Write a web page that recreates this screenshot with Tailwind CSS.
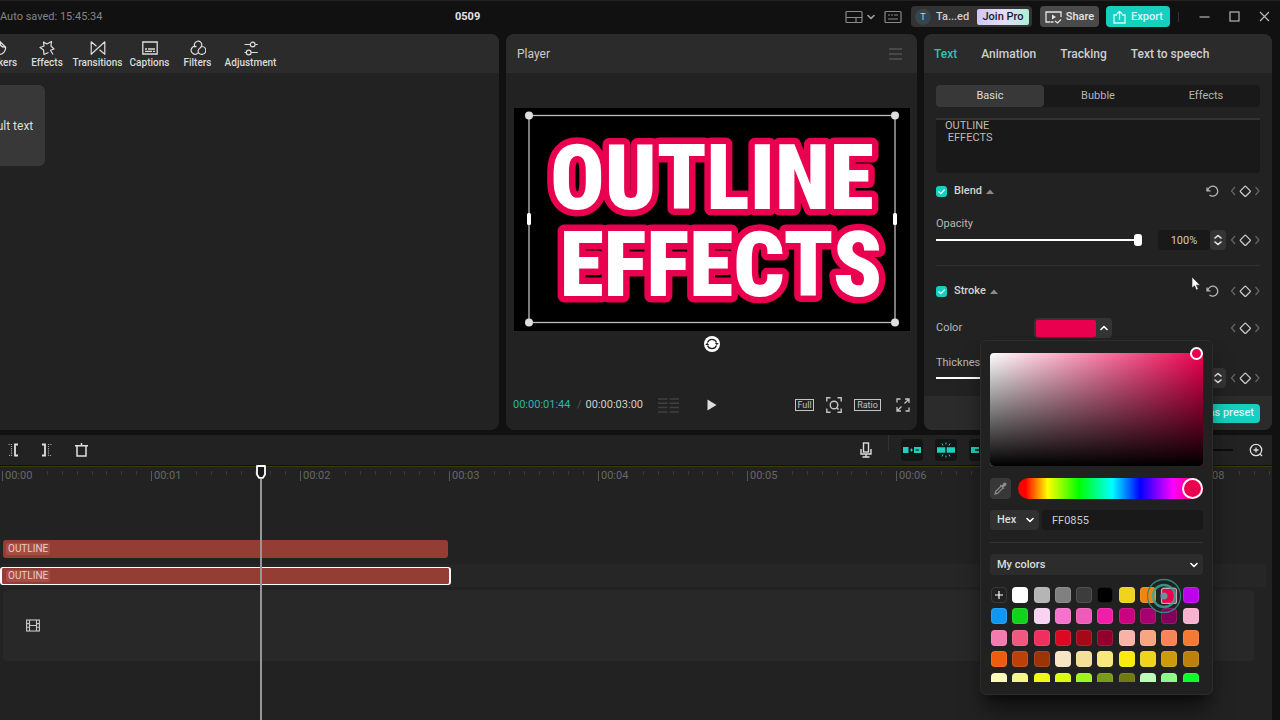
<!DOCTYPE html>
<html lang="en">
<head>
  <meta charset="UTF-8" />
  <meta name="viewport" content="width=device-width, initial-scale=1.0"/>
  <title>0509</title>
  <script src="https://cdn.jsdelivr.net/npm/@tailwindcss/browser@4"></script>
</head>
<body class="min-h-screen flex flex-col overflow-hidden bg-[#111111] text-[#d4d4d4] font-[Roboto,sans-serif] text-[11px] leading-4">

<!-- shared icons -->
<svg class="hidden">
  <symbol id="key" viewBox="0 0 30 12">
    <g fill="none" stroke-width="1.2">
      <path d="M5 2 1.500 6 5 10M25.500 2 29 6 25.500 10" stroke="#666666"/>
      <rect x="11.500" y="2.500" width="7.600" height="7.600" rx="1" transform="rotate(45 15.300 6.300)" stroke="#c9c9c9" stroke-width="1.300"/>
    </g>
  </symbol>
  <symbol id="reset" viewBox="0 0 14 14">
    <path d="M1.800 6.500A5 5 0 1 1 3.500 11M1 3.500v3.300h3.500" fill="none" stroke="#b5b5b5" stroke-width="1.300"/>
  </symbol>
  <symbol id="steps" viewBox="0 0 10 14">
    <path d="M2 5 5 2.500 8 5M2 9l3 2.500L8 9" fill="none" stroke="#eeeeee" stroke-width="1.600" stroke-linecap="round" stroke-linejoin="round"/>
  </symbol>
  <symbol id="down" viewBox="0 0 8 6">
    <path d="M1 1.500 4 4.500 7 1.500" fill="none" stroke="currentColor" stroke-width="1.600" stroke-linecap="round" stroke-linejoin="round"/>
  </symbol>
  <symbol id="check" viewBox="0 0 12 12">
    <path d="M3 6.200 5.200 8.300 9 4.300" fill="none" stroke="#ffffff" stroke-width="1.400" stroke-linecap="round"/>
  </symbol>
</svg>

<header class="h-[34px] shrink-0 flex items-center border-t border-[#222222] pr-[10px] pb-[2px]">
  <span class="w-[455px] text-[#848484]">Auto saved: 15:45:34</span>
  <h1 class="font-bold text-[#e4e4e4]">0509</h1>
  <div class="ml-auto flex items-center">
    <button aria-label="Layout" class="flex items-center gap-1 text-[#a0a0a0]">
      <svg class="w-[18px] h-[14px]" viewBox="0 0 18 14" fill="none" stroke="#8a8a8a" stroke-width="1.200"><rect x="1" y="1.500" width="16" height="11" rx="1"/><path d="M1 7.500h16M11 7.500v5"/></svg>
      <svg class="w-2 h-[6px]"><use href="#down"/></svg>
    </button>
    <button aria-label="Shortcuts" class="ml-[9px]">
      <svg class="w-[18px] h-[14px]" viewBox="0 0 18 14" fill="none" stroke="#8a8a8a" stroke-width="1.200"><rect x="1" y="1.500" width="16" height="11" rx="1"/><path d="M4 5h2M7 5h2M10 5h4M4 9h10"/></svg>
    </button>
    <div class="ml-[9px] h-[21px] w-[121px] flex items-center rounded bg-[#333333] pl-1 pr-[3px]">
      <span class="size-4 rounded-full bg-[#35474d] text-[9px] text-center text-[#c6d3d6]">T</span>
      <span class="ml-[5px] font-medium text-[#d0d0d0]">Ta...ed</span>
      <button class="ml-auto h-4 w-[52px] rounded-xs bg-linear-to-r from-[#cfc6f8] via-[#e6dcf8] to-[#aeeedb] font-medium text-[#1b1b25]">Join Pro</button>
    </div>
    <button class="ml-2 h-[21px] w-[59px] flex items-center justify-center gap-1 rounded bg-[#4a4a4a] font-medium text-[#e4e4e4]">
      <svg class="w-[17px] h-[14px]" viewBox="0 0 17 14" fill="none" stroke="#e4e4e4" stroke-width="1.300"><path d="M5 12H1V2h15v5M8.500 12H5.500M10 11l2.500 2 3.500-3.500"/><path d="m7 4.500 4 2.500-4 2.500z" fill="#e4e4e4" stroke="none"/></svg>
      Share
    </button>
    <button class="ml-[7px] h-[21px] w-[64px] flex items-center justify-center gap-[5px] rounded bg-[#16cfc0] font-medium text-[#d4fbf6]">
      <svg class="w-[13px] h-[14px]" viewBox="0 0 13 14" fill="none" stroke="#d4fbf6" stroke-width="1.300"><path d="M4 5H1v8h11V5H9M6.500 10V1.500M3.800 4 6.500 1.300 9.200 4"/></svg>
      Export
    </button>
    <span class="ml-2 h-[10px] w-px bg-[#333333]"></span>
    <div class="ml-5 flex items-center gap-[19px]">
      <button aria-label="Minimize"><svg class="size-[11px]" viewBox="0 0 11 11"><path d="M.5 6h10" stroke="#b8b8b8" stroke-width="1.200"/></svg></button>
      <button aria-label="Maximize"><svg class="size-[11px]" viewBox="0 0 11 11"><rect x="1" y="1" width="9" height="9" fill="none" stroke="#b8b8b8" stroke-width="1.200"/></svg></button>
      <button aria-label="Close"><svg class="size-[11px]" viewBox="0 0 11 11"><path d="m1 1 9 9M10 1l-9 9" stroke="#b8b8b8" stroke-width="1.200"/></svg></button>
    </div>
  </div>
</header>

<main class="grid grid-cols-[minmax(0,1fr)_411px_348px] gap-[7px] pr-2">

  <section class="rounded-r-lg bg-[#222222] overflow-hidden">
    <nav class="h-[39px] flex bg-[#2b2b2b] text-[10px] leading-3 font-medium text-[#dadada]">
      <button class="-ml-6 w-[46px] flex flex-col items-center pt-[6px] gap-px">
        <svg class="size-4" viewBox="0 0 16 16" fill="none" stroke="#dddddd" stroke-width="1.300"><path d="M9 1.500a6.500 6.500 0 1 0 5.500 5.500zM9 1.500C8.500 5 10.500 7.500 14.500 7"/></svg>Stickers
      </button>
      <button class="w-[50px] flex flex-col items-center pt-[6px] gap-px">
        <svg class="size-4" viewBox="0 0 16 16" fill="none" stroke="#dddddd" stroke-width="1.200" stroke-linejoin="round"><path d="M9.500 12.500 5 14.500 4.600 10 1 7.500 5 6 4.500 2 8 4 12.500 1.500 12 6 15 9 11.500 10.200 14 14.500"/></svg>Effects
      </button>
      <button class="w-[51px] flex flex-col items-center pt-[6px] gap-px">
        <svg class="size-4" viewBox="0 0 16 16" fill="none" stroke="#dddddd" stroke-width="1.200" stroke-linejoin="round"><path d="M6.500 6.300 1.200 1.800v12.500L14.800 1.800v12.500L9.500 9.700"/></svg>Transitions
      </button>
      <button class="w-[53px] flex flex-col items-center pt-[6px] gap-px">
        <svg class="size-4" viewBox="0 0 16 16" fill="none" stroke="#dddddd" stroke-width="1.300"><path d="M.8 2h14.400v12H.8zM3 9h2M6 9h7M3 11.300h7M11 11.300h2"/></svg>Captions
      </button>
      <button class="w-[43px] flex flex-col items-center pt-[6px] gap-px">
        <svg class="size-4" viewBox="0 0 16 16" fill="none" stroke="#dddddd" stroke-width="1.200"><path d="M5.300 7.300A3.700 3.700 0 1 1 11.600 6C11 8 8.500 8.500 8 11M6.500 6.600A3.900 3.900 0 1 0 8 12.800M8 11a3.900 3.900 0 1 0 4-4.500"/></svg>Filters
      </button>
      <button class="w-[63px] flex flex-col items-center pt-[6px] gap-px">
        <svg class="size-4" viewBox="0 0 16 16" fill="none" stroke="#dddddd" stroke-width="1.200"><path d="M1.500 4.500h5.700M12.200 4.500h2.600M1.500 12.500h1.700M8.200 12.500h6.600"/><circle cx="9.700" cy="4.500" r="2.400"/><circle cx="5.700" cy="12.500" r="2.400"/></svg>Adjustment
      </button>
    </nav>
    <button class="mt-3 -ml-10 h-[81px] w-[85px] rounded-md bg-[#383838] text-[12px] text-[#dddddd]">Default text</button>
  </section>

  <section class="flex flex-col rounded-lg bg-[#222222] overflow-hidden">
    <div class="h-[39px] flex items-center justify-between bg-[#2b2b2b] pl-[11px] pr-[15px] text-[12px] text-[#cccccc]">
      <h2>Player</h2>
      <button aria-label="Player menu"><svg class="w-[13px] h-3" viewBox="0 0 13 12"><path d="M0 1h13M0 6h13M0 11h13" stroke="#666666" stroke-width="1.200"/></svg></button>
    </div>
    <div class="mt-[35px] pl-2 pr-[7px] text-center">
      <svg class="w-full bg-black" viewBox="0 0 396 223" role="img" aria-label="Preview">
        <g font-family="'Roboto Condensed',Roboto,sans-serif" font-weight="900" font-size="90" fill="#ffffff" stroke="#e9004f" stroke-width="13" stroke-linejoin="round" paint-order="stroke" text-anchor="middle">
          <text x="198" y="101">OUTLINE</text>
          <text x="207" y="188">EFFECTS</text>
        </g>
        <rect x="15" y="7.500" width="366" height="207" fill="none" stroke="#bdbdbd" stroke-width="1.300"/>
        <g fill="#dedede"><circle cx="15" cy="7.500" r="4"/><circle cx="381" cy="7.500" r="4"/><circle cx="15" cy="214.500" r="4"/><circle cx="381" cy="214.500" r="4"/></g>
        <g fill="#ffffff"><rect x="13" y="105" width="4" height="12" rx="1.500"/><rect x="379" y="105" width="4" height="12" rx="1.500"/></g>
      </svg>
      <button aria-label="Rotate" class="mt-[5px] size-4 rounded-full bg-white">
        <svg class="size-4" viewBox="0 0 16 16" fill="none" stroke="#222222" stroke-width="1.300"><path d="M3.500 6.500a4.800 4.800 0 0 1 9 0M12.500 9.500a4.800 4.800 0 0 1-9 0"/><path d="M10.800 7h4l-2 2.300zM1.200 9h4l-2-2.300z" fill="#222222" stroke="none"/></svg>
      </button>
    </div>
    <div class="mt-auto h-[50px] flex items-center pl-[7px] pr-[7px]">
      <span class="w-[60px] text-[#2fb5a5]">00:00:01:44</span>
      <span class="mx-1 text-[#555555]">/</span>
      <span class="w-[61px] text-[#d0d0d0]">00:00:03:00</span>
      <svg class="ml-[11px] w-[21px] h-[15px]" viewBox="0 0 21 15"><path d="M0 1h9.500M11.500 1H21M0 5.300h9.500M11.500 5.300H21M0 9.600h9.500M11.500 9.600H21M0 14h9.500M11.500 14H21" stroke="#404040" stroke-width="1.500"/></svg>
      <button aria-label="Play" class="ml-7"><svg class="w-[10px] h-3" viewBox="0 0 10 12"><path d="M.5.500 9.500 6 .5 11.500z" fill="#dddddd"/></svg></button>
      <div class="ml-auto flex items-center gap-3">
        <button class="h-3 w-[19px] border border-[#c4c4c4] text-[9px] leading-[10px] text-[#c4c4c4]">Full</button>
        <button aria-label="Zoom preview"><svg class="size-4" viewBox="0 0 16 16" fill="none" stroke="#c4c4c4" stroke-width="1.400"><path d="M.8 4.500V.8h3.700M11.500.8h3.700v3.700M15.200 11.500v3.700h-3.700M4.500 15.200H.8v-3.700"/><circle cx="8" cy="8" r="3.800"/><path d="m10.500 10.500 2 2"/></svg></button>
        <button class="h-3 w-[27px] border border-[#c4c4c4] text-[9px] leading-[10px] text-[#c4c4c4]">Ratio</button>
        <button aria-label="Full screen" class="ml-[3px]"><svg class="size-[14px]" viewBox="0 0 14 14" fill="none" stroke="#c4c4c4" stroke-width="1.300"><path d="M1 4.500V1h3.500M13 9.500V13H9.500M9 1h4v4M13 1 8.500 5.500M5 13H1V9M1 13l4.500-4.500"/></svg></button>
      </div>
    </div>
  </section>

  <section class="relative flex flex-col rounded-lg bg-[#222222]">
    <nav class="h-[39px] flex items-center gap-6 rounded-t-lg bg-[#2b2b2b] px-[10px] text-[12px] font-medium text-[#cfcfcf]">
      <a href="#" class="text-[#2bc4b4]">Text</a>
      <a href="#">Animation</a>
      <a href="#">Tracking</a>
      <a href="#">Text to speech</a>
    </nav>
    <div class="px-3 pt-3">
      <div class="h-[22px] grid grid-cols-3 rounded bg-[#191919] text-[#b4b4b4]">
        <button class="rounded bg-[#383838] text-[#dddddd]">Basic</button>
        <button>Bubble</button>
        <button>Effects</button>
      </div>
      <textarea aria-label="Text" class="mt-[11px] block h-[55px] w-full resize-none rounded-b border-t-2 border-[#333333] bg-[#191919] pl-[9px] text-[11px] leading-3 text-[#bcbcbc]">OUTLINE
 EFFECTS</textarea>

      <div class="mt-[10px] h-4 flex items-center">
        <label class="flex items-center font-medium">
          <span class="grid">
            <input type="checkbox" checked class="col-start-1 row-start-1 size-[11px] appearance-none rounded-[3px] bg-[#16cfc0]"/>
            <svg class="col-start-1 row-start-1 size-[11px]"><use href="#check"/></svg>
          </span>
          <span class="ml-[7px]">Blend</span>
        </label>
        <svg class="ml-1 w-2 h-[5px]" viewBox="0 0 8 5"><path d="M0 5 4 .5 8 5z" fill="#8a8a8a"/></svg>
        <button aria-label="Reset blend" class="ml-auto"><svg class="size-[14px]"><use href="#reset"/></svg></button>
        <button aria-label="Blend keyframe" class="ml-[10px]"><svg class="w-[30px] h-3"><use href="#key"/></svg></button>
      </div>

      <label for="opacity" class="mt-[17px] block text-[#b8b8b8]">Opacity</label>
      <div class="-mt-[2px] h-5 flex items-center">
        <input id="opacity" type="range" value="100" class="h-[2px] w-[206px] appearance-none bg-white [&::-webkit-slider-thumb]:appearance-none [&::-webkit-slider-thumb]:h-3 [&::-webkit-slider-thumb]:w-2 [&::-webkit-slider-thumb]:rounded-[3px] [&::-webkit-slider-thumb]:bg-white"/>
        <input aria-label="Opacity value" value="100%" class="ml-4 h-5 w-[52px] rounded bg-[#191919] text-center text-[#cccccc]"/>
        <button aria-label="Step opacity" class="h-5 w-4 grid place-items-center rounded bg-[#343434]"><svg class="w-[10px] h-[14px]"><use href="#steps"/></svg></button>
        <button aria-label="Opacity keyframe" class="ml-auto"><svg class="w-[30px] h-3"><use href="#key"/></svg></button>
      </div>

      <hr class="mt-[15px] border-[#303030]"/>

      <div class="mt-[17px] h-4 flex items-center">
        <label class="flex items-center font-medium">
          <span class="grid">
            <input type="checkbox" checked class="col-start-1 row-start-1 size-[11px] appearance-none rounded-[3px] bg-[#16cfc0]"/>
            <svg class="col-start-1 row-start-1 size-[11px]"><use href="#check"/></svg>
          </span>
          <span class="ml-[7px]">Stroke</span>
        </label>
        <svg class="ml-1 w-2 h-[5px]" viewBox="0 0 8 5"><path d="M0 5 4 .5 8 5z" fill="#8a8a8a"/></svg>
        <button aria-label="Reset stroke" class="ml-auto"><svg class="size-[14px]"><use href="#reset"/></svg></button>
        <button aria-label="Stroke keyframe" class="ml-[10px]"><svg class="w-[30px] h-3"><use href="#key"/></svg></button>
      </div>

      <div class="mt-[19px] h-5 flex items-center">
        <span class="w-[98px] text-[#b8b8b8]">Color</span>
        <button aria-label="Stroke color" class="h-5 w-[78px] flex items-center rounded bg-[#343434] pl-[2px] text-white">
          <span class="h-[17px] w-[60px] rounded-xs bg-[#e9004f]"></span>
          <svg class="ml-1 w-2 h-[6px] rotate-180"><use href="#down"/></svg>
        </button>
        <button aria-label="Color keyframe" class="ml-auto"><svg class="w-[30px] h-3"><use href="#key"/></svg></button>
      </div>

      <label for="thickness" class="mt-[17px] block text-[#b8b8b8]">Thickness</label>
      <div class="-mt-[3px] h-5 flex items-center">
        <input id="thickness" type="range" value="40" class="h-[2px] w-[206px] appearance-none bg-white [&::-webkit-slider-thumb]:appearance-none [&::-webkit-slider-thumb]:h-3 [&::-webkit-slider-thumb]:w-2 [&::-webkit-slider-thumb]:rounded-[3px] [&::-webkit-slider-thumb]:bg-white"/>
        <button aria-label="Step thickness" class="ml-[68px] h-5 w-4 grid place-items-center rounded bg-[#343434]"><svg class="w-[10px] h-[14px]"><use href="#steps"/></svg></button>
        <button aria-label="Thickness keyframe" class="ml-auto"><svg class="w-[30px] h-3"><use href="#key"/></svg></button>
      </div>
    </div>
    <footer class="mt-2 h-[34px] flex items-center justify-end rounded-b-lg bg-[#2b2b2b] px-3">
      <button class="h-[19px] rounded bg-[#16cfc0] px-[6px] font-medium text-[#d4fbf6]">Save as preset</button>
    </footer>

    <!-- color picker -->
    <div class="absolute z-20 top-[306px] right-[59px] w-[233px] rounded-md border border-[#2c2c2c] bg-[#212121] px-[9px] pt-3 pb-3 shadow-xl shadow-black/50">
      <div class="relative h-[113px] rounded bg-linear-to-r/srgb from-white to-[#f00050] overflow-hidden">
        <div class="h-full bg-linear-to-b/srgb from-black/0 to-black"></div>
      </div>
      <span class="absolute top-[6px] right-[9px] size-[13px] rounded-full border-2 border-white bg-[#e9004f]"></span>

      <div class="mt-3 flex items-center gap-[7px]">
        <button aria-label="Pick from screen" class="size-[21px] grid place-items-center rounded bg-[#383838]">
          <svg class="size-[13px]" viewBox="0 0 13 13" fill="none" stroke="#8d8d8d" stroke-width="1.200"><path d="m7.300 3.800-5.500 5.500L1 12l2.700-.8 5.500-5.500"/><path d="m6.300 3 3.700 3.700M8 4l2-2.500c1-1 2.500.5 1.500 1.500L9 5z" fill="#8d8d8d"/></svg>
        </button>
        <div class="relative h-[21px] flex-1 rounded-full bg-[linear-gradient(to_right,#ff0000_4%,#ffff00_16%,#00ff00_33%,#00ffff_51%,#0000ff_66%,#ff00ff_84%,#ff0040_98%)]">
          <span class="absolute top-0 right-0 size-[21px] rounded-full border-2 border-white bg-[#e9004f]"></span>
        </div>
      </div>

      <div class="mt-[11px] flex items-center gap-[3px]">
        <div class="grid items-center">
          <select aria-label="Color format" class="col-start-1 row-start-1 h-5 w-[49px] appearance-none rounded bg-[#303031] pl-[7px] font-medium text-[#dddddd]"><option>Hex</option></select>
          <svg class="col-start-1 row-start-1 justify-self-end mr-[5px] w-2 h-[6px] text-white"><use href="#down"/></svg>
        </div>
        <input aria-label="Hex value" value="FF0855" class="h-5 min-w-0 flex-1 rounded bg-[#191919] pl-[10px] text-[#cccccc]"/>
      </div>

      <hr class="mt-3 border-[#343434]"/>

      <div class="mt-[11px] grid items-center">
        <select aria-label="Palette" class="col-start-1 row-start-1 h-[21px] w-full appearance-none rounded bg-[#2c2c2d] pl-[7px] font-medium text-[#dddddd]"><option>My colors</option></select>
        <svg class="col-start-1 row-start-1 justify-self-end mr-[5px] w-2 h-[6px] text-white"><use href="#down"/></svg>
      </div>

      <div class="relative mt-3 h-[95px]">
        <div class="h-full overflow-hidden">
          <div id="swatches" class="h-[107px] grid grid-cols-10 grid-rows-5"></div>
        </div>
        <!-- click ripple -->
        <svg class="absolute -top-[9px] right-[21px] size-9" viewBox="0 0 36 36" fill="none">
          <rect x="15.500" y="10.500" width="15" height="15" rx="2" stroke="#c9a9b8" stroke-width="1.200"/>
          <circle cx="18" cy="18" r="16.500" stroke="#2b8a7c" stroke-width="1.300"/>
          <circle cx="18" cy="18" r="11" stroke="#3aa39a" stroke-opacity=".85" stroke-width="2.500"/>
          <circle cx="18" cy="18" r="3.500" fill="#6c8f9c"/>
        </svg>
      </div>
    </div>

    <!-- pointer -->
    <svg class="absolute z-30 top-[242px] left-[267px] w-[10px] h-[15px]" viewBox="0 0 10 15"><path d="M1 1v11l2.600-2.200L5.300 14l2-1-1.800-3.800H9z" fill="#ffffff" stroke="#222222" stroke-width=".6"/></svg>
  </section>
</main>

<section class="relative mt-[5px] mr-2 flex-1 bg-[#222222]">
  <div class="h-[31px] flex items-center border-b border-[#111111] pl-[7px] pr-[9px]">
    <button aria-label="Trim left"><svg class="w-3 h-[14px]" viewBox="0 0 12 14" fill="none" stroke="#e0e0e0" stroke-width="1.800"><path d="M11 1.500H8v11h3"/><path d="M1.500 1.500h3v11h-3" stroke="#a0a0a0" stroke-width="1.200" stroke-dasharray="1.200 1"/></svg></button>
    <button aria-label="Trim right" class="ml-[22px]"><svg class="w-3 h-[14px]" viewBox="0 0 12 14" fill="none" stroke="#e0e0e0" stroke-width="1.800"><path d="M1 1.500h3v11H1"/><path d="M10.500 1.500h-3v11h3" stroke="#a0a0a0" stroke-width="1.200" stroke-dasharray="1.200 1"/></svg></button>
    <button aria-label="Delete" class="ml-[22px]"><svg class="w-[13px] h-[14px]" viewBox="0 0 13 14" fill="none" stroke="#e0e0e0" stroke-width="1.500"><path d="M0 2.700h13M2 2.700v10.300h9V2.700M6.500 0v2.500"/></svg></button>
    <button aria-label="Record voice" class="ml-auto"><svg class="w-3 h-4" viewBox="0 0 12 16" fill="none" stroke="#dddddd" stroke-width="1.400"><rect x="3.500" y="1" width="5" height="9"/><path d="M1 7v5h10V7M6 12v3M2.500 15h7"/></svg></button>
    <span class="ml-4 h-4 w-px self-start bg-[#303030]"></span>
    <div class="ml-3 flex gap-3">
      <button aria-label="Main track magnet" class="size-[22px] grid place-items-center rounded bg-[#151515]"><svg class="w-[18px] h-2" viewBox="0 0 18 8"><path d="M0 1h5.500v6H0zM11 1h7v6h-7z" fill="#22cdbc"/><path d="M7 4h3M8.500 2.500v3" stroke="#22cdbc"/><path d="M12.500 4h3.500" stroke="#151515"/></svg></button>
      <button aria-label="Auto snapping" class="size-[22px] grid place-items-center rounded bg-[#151515]"><svg class="w-[18px] h-4" viewBox="0 0 18 16"><path d="M0 5.200h8.300v5.600H0zM9.700 5.200H18v5.600H9.700z" fill="#22cdbc"/><path d="M9 .5v2M9 13.500v2M5 1.500l1 2M13 1.500l-1 2M5 14.500l1-2M13 14.500l-1-2" stroke="#22cdbc"/></svg></button>
      <button aria-label="Linkage" class="size-[22px] grid place-items-center rounded bg-[#151515]"><svg class="w-[18px] h-2" viewBox="0 0 18 8"><path d="M0 1h8v6H0zM10 1h8v6h-8z" fill="#22cdbc"/><path d="M4 4h10" stroke="#151515" stroke-width="1.500"/></svg></button>
    </div>
    <input aria-label="Timeline zoom" type="range" value="40" class="ml-[142px] h-[2px] w-[100px] appearance-none bg-[#0c0c0c] [&::-webkit-slider-thumb]:appearance-none [&::-webkit-slider-thumb]:size-2 [&::-webkit-slider-thumb]:rounded-full [&::-webkit-slider-thumb]:bg-white"/>
    <button aria-label="Zoom in" class="ml-4"><svg class="size-[14px]" viewBox="0 0 14 14" fill="none" stroke="#dddddd" stroke-width="1.300"><circle cx="7" cy="7" r="5.700"/><path d="M4.500 7h5M7 4.500v5M11 11l2 2"/></svg></button>
  </div>

  <div id="ruler" class="h-[22px] flex overflow-hidden border-t border-[#3a3a12] pl-[2px] text-[#686868]"></div>

  <div class="mt-[52px] pl-[3px]">
    <div class="h-[18px] w-[445px] rounded-[3px] bg-[#943d34] p-[3px]">
      <span class="block w-fit rounded-xs bg-[#a64d44] px-[2px] text-[10px] leading-3 text-[#e8cdc8]">OUTLINE</span>
    </div>
    <div class="mt-[6px] mr-[6px] h-[23px] flex items-center bg-[#262626]">
      <div class="-ml-[3px] h-[18px] w-[451px] rounded-[3px] border-x-2 border-y border-white bg-[#943d34] px-1 py-[2px]">
        <span class="block w-fit rounded-xs bg-[#a64d44] px-[2px] text-[10px] leading-3 text-[#e8cdc8]">OUTLINE</span>
      </div>
    </div>
    <div class="mt-[3px] mr-[18px] h-[71px] flex items-center rounded bg-[#282828] pl-[23px]">
      <svg class="w-[14px] h-[13px]" viewBox="0 0 14 13" fill="none" stroke="#c8c8c8" stroke-width="1.100"><rect x=".6" y="1" width="12.800" height="11"/><path d="M3.500 1v11M10.500 1v11M3.500 6.500h7M.6 4.600h2.900M.6 8.300h2.900M10.500 4.600h2.900M10.500 8.300h2.900"/></svg>
    </div>
  </div>

  <!-- playhead -->
  <div class="absolute z-10 top-[30px] bottom-0 left-[256px] w-[10px] flex flex-col items-center">
    <svg class="w-[10px] h-[14px] shrink-0" viewBox="0 0 10 14"><path d="M1 1h8v8.500L7 12.800H3L1 9.500z" fill="#191919" stroke="#ffffff" stroke-width="1.800" stroke-linejoin="round"/></svg>
    <div class="w-[2px] flex-1 bg-[#969696]"></div>
  </div>
</section>

<script>
  const colors = [
    "", "#ffffff", "#b5b5b5", "#808080", "#3c3c3c", "#000000", "#efd31c", "#f0860f", "#e9004f", "#bd00ee",
    "#0f97f2", "#12d31b", "#f8d2f0", "#f573cc", "#f05bb9", "#ee1fa6", "#cb0080", "#a5006d", "#82005a", "#f7b2d0",
    "#f47bb0", "#f1587f", "#ef305f", "#dc0720", "#a60817", "#8f002f", "#f8b2a8", "#f8a582", "#f58558", "#f47932",
    "#ee5c0c", "#bd400a", "#9c3405", "#f7e5c5", "#f2df98", "#f8e87c", "#faea12", "#eed41c", "#cc9b0c", "#bd800b",
    "#fbfab8", "#f5f68a", "#effc12", "#dcfc14", "#a1f41c", "#7b9a18", "#707a10", "#bdfbb8", "#8cfb8c", "#0ffb2a"
  ];
  const swatches = document.getElementById("swatches");

  colors.forEach((color, i) => {
    const btn = document.createElement("button");
    btn.className = "size-4 ml-px rounded border border-white/10 text-white grid place-items-center";
    if (i === 0) {
      btn.setAttribute("aria-label", "Add color");
      btn.innerHTML = '<svg class="size-2" viewBox="0 0 8 8"><path d="M4 0v8M0 4h8" stroke="#fff" stroke-width="1.200"/></svg>';
    } else {
      btn.setAttribute("aria-label", color);
      btn.style.backgroundColor = color;
    }
    swatches.appendChild(btn);
  });

  const ruler = document.getElementById("ruler");

  for (let s = 0; s < 9; s++) {
    const cell = document.createElement("div");
    cell.className = "w-[149px] shrink-0 flex items-start pt-1";
    let ticks = "";
    for (let t = 3; t < 10; t++) {
      ticks += '<span class="h-1 flex-1 border-l border-[#383838]"></span>';
    }
    cell.innerHTML = `<span class="w-[45px] h-[10px] shrink-0 border-l border-[#585858] pl-[2px] leading-[10px]">00:0${s}</span>${ticks}`;
    ruler.appendChild(cell);
  }
</script>

</body>
</html>
